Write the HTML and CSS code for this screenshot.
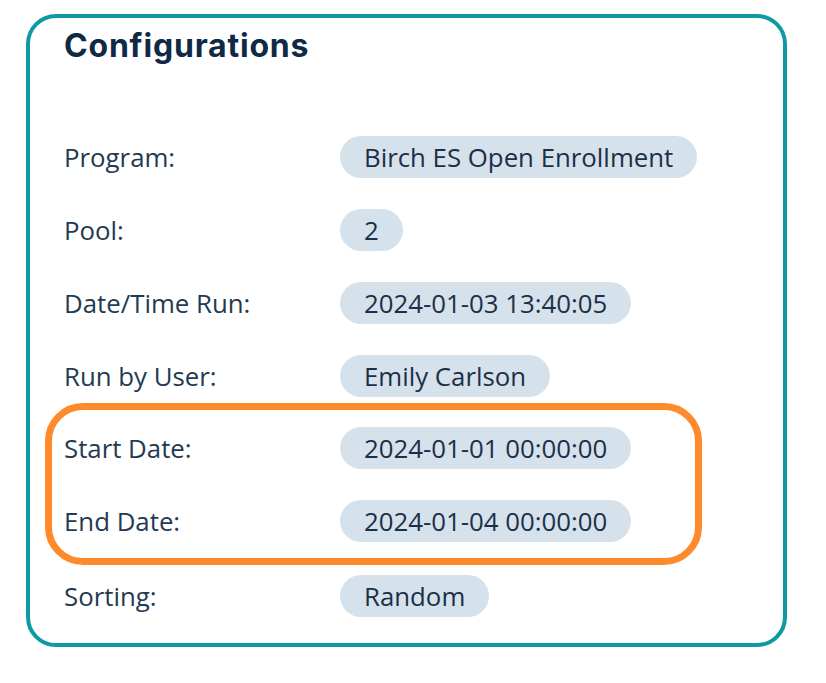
FILE: index.html
```html
<!DOCTYPE html>
<html lang="en">
<head>
<meta charset="utf-8">
<link rel="stylesheet" href="styles.css">
</head>
<body>
<section class="card">
  <h2 class="title">Configurations</h2>
  <div class="rows">
    <div class="row"><span class="label">Program:</span><span class="pill">Birch ES Open Enrollment</span></div>
    <div class="row"><span class="label">Pool:</span><span class="pill">2</span></div>
    <div class="row"><span class="label">Date/Time Run:</span><span class="pill">2024-01-03 13:40:05</span></div>
    <div class="row"><span class="label">Run by User:</span><span class="pill">Emily Carlson</span></div>
    <div class="highlight">
      <div class="row"><span class="label">Start Date:</span><span class="pill">2024-01-01 00:00:00</span></div>
      <div class="row"><span class="label">End Date:</span><span class="pill">2024-01-04 00:00:00</span></div>
    </div>
    <div class="row"><span class="label">Sorting:</span><span class="pill">Random</span></div>
  </div>
</section>
</body>
</html>
```
FILE: styles.css
```css
html, body {
  margin: 0;
  padding: 0;
  background: #ffffff;
}
body {
  padding: 14px 0 0 26px;
  font-family: "Open Sans", "Noto Sans", sans-serif;
  color: #1d3149;
}
.card {
  box-sizing: border-box;
  width: 761px;
  height: 633px;
  border: 4px solid #0f9aa1;
  border-radius: 30px;
  padding: 8px 0 0 34px;
}
.title {
  margin: 0;
  font-family: "Inter", "Lato", sans-serif;
  font-weight: 700;
  font-size: 32px;
  line-height: 40px;
  color: #102a45;
  letter-spacing: 0.8px;
}
.rows {
  display: flex;
  flex-direction: column;
  gap: 31px;
  margin-top: 70px;
}
.row {
  display: flex;
  align-items: center;
  height: 42px;
}
.label {
  width: 276px;
  font-size: 25.8px;
  color: #243a52;
}
.pill {
  display: inline-flex;
  align-items: center;
  height: 42px;
  padding: 0 24px;
  border-radius: 21px;
  background: #d5e2eb;
  font-size: 25.8px;
  color: #1b3048;
}
.highlight {
  display: flex;
  flex-direction: column;
  gap: 31px;
  width: 657px;
  box-sizing: border-box;
  margin: -25px 0 -21px -19px;
  padding: 17px 0 16px 12px;
  border: 7px solid #ff8a2b;
  border-radius: 38px;
}
```
